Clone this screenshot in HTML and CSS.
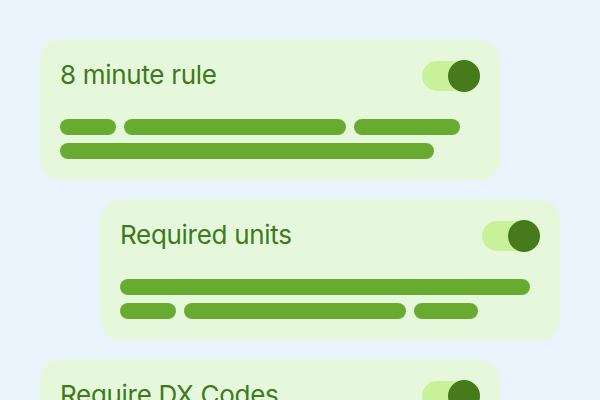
FILE: index.html
```html
<!DOCTYPE html>
<html>
<head>
<meta charset="utf-8">
<link rel="stylesheet" href="styles.css">
</head>
<body>
<div class="stack">
  <div class="card">
    <div class="head">
      <span class="title">8 minute rule</span>
      <span class="toggle"><span class="knob"></span></span>
    </div>
    <div class="lines">
      <div class="row"><span class="bar" style="width:56px"></span><span class="bar" style="width:222px"></span><span class="bar" style="width:106px"></span></div>
      <div class="row"><span class="bar" style="width:374px"></span></div>
    </div>
  </div>
  <div class="card shifted">
    <div class="head">
      <span class="title">Required units</span>
      <span class="toggle"><span class="knob"></span></span>
    </div>
    <div class="lines">
      <div class="row"><span class="bar" style="width:410px"></span></div>
      <div class="row"><span class="bar" style="width:56px"></span><span class="bar" style="width:222px"></span><span class="bar" style="width:64px"></span></div>
    </div>
  </div>
  <div class="card">
    <div class="head">
      <span class="title">Require DX Codes</span>
      <span class="toggle"><span class="knob"></span></span>
    </div>
  </div>
</div>
</body>
</html>
```
FILE: styles.css
```css
html, body {
  margin: 0;
  padding: 0;
  background: #e8f3fb;
  width: 600px;
  height: 400px;
  overflow: hidden;
}
.stack {
  display: flex;
  flex-direction: column;
  gap: 20px;
  padding: 40px 0 0 40px;
}
.card {
  width: 460px;
  height: 140px;
  box-sizing: border-box;
  padding: 20px 20px 20px 20px;
  background: #e6f8dc;
  border-radius: 20px;
  flex-shrink: 0;
}
.shifted {
  margin-left: 60px;
}
.head {
  display: flex;
  justify-content: space-between;
  align-items: center;
  height: 32px;
}
.title {
  font-family: Inter, "Noto Sans", sans-serif;
  font-size: 26px;
  color: #3d7a1d;
  letter-spacing: -0.3px;
  line-height: 32px;
  margin-top: -3px;
}
.toggle {
  position: relative;
  width: 58px;
  height: 30px;
  border-radius: 15px;
  background: #c9f09b;
}
.knob {
  position: absolute;
  right: 0;
  top: -1px;
  width: 32px;
  height: 32px;
  border-radius: 50%;
  background: #467a1a;
}
.lines {
  margin-top: 27px;
  display: flex;
  flex-direction: column;
  gap: 8px;
}
.row {
  display: flex;
  gap: 8px;
}
.bar {
  height: 16px;
  border-radius: 8px;
  background: #69ab30;
}
```
